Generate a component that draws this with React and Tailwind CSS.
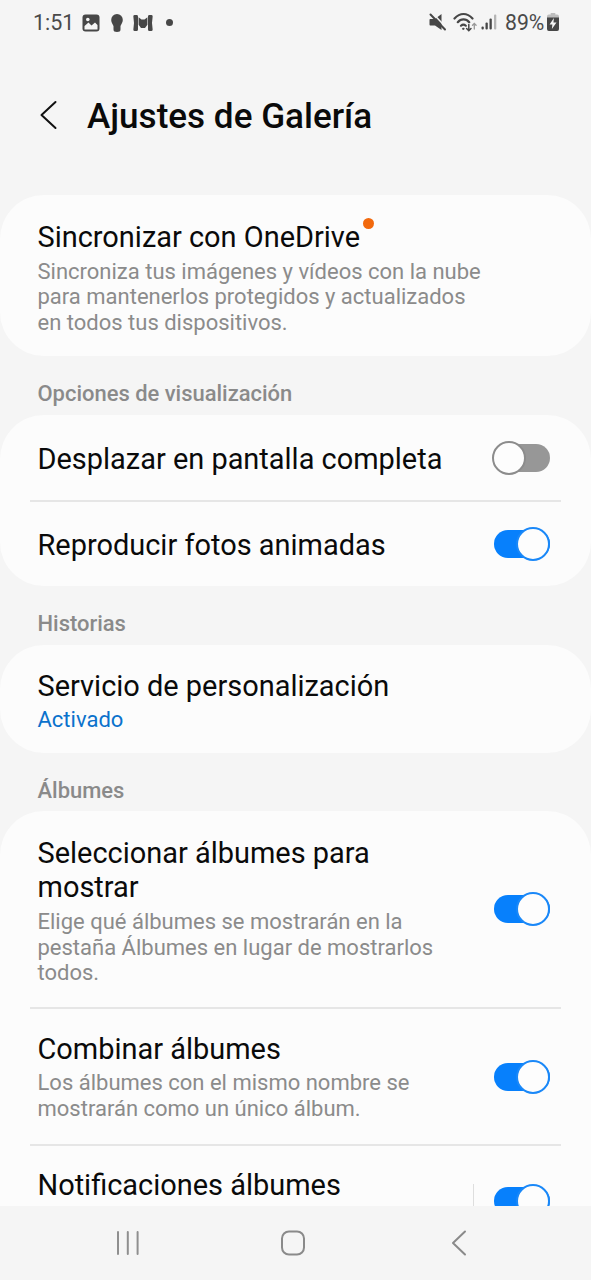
// Gallery settings screen
import { useState } from "react";

function Toggle({ on, onClick }) {
  return (
    <button className="relative block h-[34px] w-[58px] shrink-0" onClick={onClick}>
      <span className={`absolute top-[3px] left-[2px] h-7 w-14 rounded-full ${on ? "bg-[#0780fc]" : "bg-[#979797]"}`} />
      <span
        className={`absolute top-0 h-[34px] w-[34px] rounded-full border-2 bg-[#fdfdfd] ${
          on ? "right-0 border-[#1a88f8]" : "left-0 border-[#8c8c8c]"
        }`}
      />
    </button>
  );
}

function Divider() {
  return <div className="mx-[30px] h-[2px] shrink-0 bg-[#e6e6e6]" />;
}

function Section({ title }) {
  return (
    <h2 className="flex h-[59px] shrink-0 items-center pt-[17px] pl-[37.5px] text-[21.95px] leading-[26px] font-medium text-[#8a8a8a]">{title}</h2>
  );
}

function Title({ children }) {
  return <p className="text-[28.95px] leading-[34px] whitespace-nowrap text-[#0a0a0a]">{children}</p>;
}

function Desc({ children }) {
  return <p className="mt-[4.5px] text-[22px] leading-[25.7px] whitespace-nowrap text-[#8b8b8b]">{children}</p>;
}

function StatusBar() {
  return (
    <div className="flex h-[45px] shrink-0 items-center text-[21.5px] text-[#4a4a4a]">
      <span className="mt-px ml-[33px] w-[42px]">1:51</span>
      <svg className="ml-[7px]" width="18" height="18" viewBox="0 0 18 18">
        <rect x="0.5" y="0.5" width="17" height="17" rx="3" fill="#474747" />
        <path d="M2.500 15.500v-3.500l4-3.500 3 3 3.500-3 2.500 2.500v4.500z" fill="#f5f5f5" />
        <circle cx="5.800" cy="5.500" r="1.800" fill="#f5f5f5" />
      </svg>
      <svg className="ml-[10px]" width="14" height="20" viewBox="0 0 14 20">
        <path d="M7 1a5.800 5.800 0 0 1 5.800 6c0 2.500-1.600 4.300-2.300 6v3.500c0 1.800-1.200 2.500-3.500 2.500s-3.500-.7-3.500-2.500V13C2.800 11.300 1.200 9.500 1.200 7A5.800 5.800 0 0 1 7 1z" fill="#474747" />
      </svg>
      <svg className="ml-[9px]" width="20" height="18" viewBox="0 0 20 18">
        <path d="M1.500 1h2.300c1 0 1.200.8 1.200 2v12c0 1.200-.2 2-1.200 2H1.500C.6 17 .2 16.200.4 15L1 9 .400 3C.2 1.800.6 1 1.500 1zM18.500 1h-2.300c-1 0-1.200.8-1.200 2v12c0 1.200.2 2 1.200 2h2.300c.9 0 1.300-.8 1.100-2L19 9l.6-6c.2-1.200-.2-2-1.100-2z" fill="#474747" />
        <path d="M5.600 3.300 8.500 5.500h3l2.900-2.200v7.500L12 14H8l-2.400-3.200z" fill="#474747" />
      </svg>
      <span className="ml-[13px] h-[7px] w-[7px] rounded-full bg-[#474747]" />
      <div className="ml-auto flex items-center pr-[32px]">
        <svg width="18" height="18" viewBox="0 0 18 18">
          <path d="M1.500 6h4.500L12.500 1v16L6 12.500H1.500C.8 12.500.5 12 .5 11.500V7c0-.6.3-1 1-1z" fill="#474747" />
          <path d="m3.500 0 15 16" stroke="#f5f5f5" strokeWidth="1.500" />
          <path d="m1.500 1.500 14.500 15" stroke="#474747" strokeWidth="2" strokeLinecap="round" />
        </svg>
        <svg className="ml-[6px]" width="24" height="20" viewBox="0 0 24 20" fill="none" stroke="#474747" strokeWidth="2.200" strokeLinecap="round">
          <path d="M1.500 6.500c5.500-6 12.500-6 18 0M4.800 10.200c3.200-3.800 8.200-3.800 11.400 0M8 13.700c1.500-1.400 3.300-1.400 4.800 0" />
          <circle cx="10.200" cy="16.800" r=".700" fill="#474747" strokeWidth="1" />
          <path d="M15.800 12.500v6M13.600 16.500l2.200 2.200 2.200-2.200" strokeWidth="1.500" />
          <path d="M21.300 17v-5.500M19.500 13.300l1.800-1.800 1.800 1.800" stroke="#999" strokeWidth="1.300" />
        </svg>
        <svg className="ml-[4px]" width="16" height="18" viewBox="0 0 16 18" fill="#474747">
          <rect x="0.500" y="13.500" width="2.300" height="3" rx="1" />
          <rect x="4.500" y="9.500" width="2.300" height="7" rx="1" />
          <rect x="8.500" y="5.500" width="2.300" height="11" rx="1" />
          <rect x="13" y="1.500" width="2.300" height="15" rx="1" fill="#b5b5b5" />
        </svg>
        <span className="mt-px ml-[8px] w-[40px] whitespace-nowrap text-[21.2px]">89%</span>
        <svg className="ml-[2px]" width="12" height="18" viewBox="0 0 13 18" preserveAspectRatio="none">
          <path d="M4 0h5v1.500h2a2 2 0 0 1 2 2V6H0V3.500a2 2 0 0 1 2-2h2z" fill="#bdbdbd" />
          <path d="M0 4.500h13V16a2 2 0 0 1-2 2H2a2 2 0 0 1-2-2z" fill="#474747" />
          <path d="M7.500 5 2.800 11.500h3L5.300 16l5-6.500H7z" fill="#f5f5f5" />
        </svg>
      </div>
    </div>
  );
}

export default function App() {
  const [state, setState] = useState({ scroll: false, motion: true, select: true, merge: true, notify: true });
  const flip = (key) => setState({ ...state, [key]: !state[key] });

  return (
    <div className="flex h-[1280px] w-[591px] flex-col overflow-hidden bg-[#f5f5f5] font-['Roboto',sans-serif]">
      <StatusBar />

      <header className="flex h-[150px] shrink-0 items-start pt-[50px] pl-[40px]">
        <svg className="mt-[5px]" width="18" height="30" viewBox="0 0 18 30" fill="none" stroke="#111" strokeWidth="2" strokeLinecap="round" strokeLinejoin="round">
          <path d="M15.500 2 1.500 15l14 13" />
        </svg>
        <h1 className="ml-[29px] text-[35.1px] leading-[42px] font-medium text-[#0a0a0a]">Ajustes de Galería</h1>
      </header>

      <main className="flex min-h-0 grow flex-col overflow-hidden">
        <div className="h-[161px] shrink-0 rounded-[44px] bg-[#fcfcfc] pt-[25px] pl-[37.5px]">
          <div className="flex">
            <Title>Sincronizar con OneDrive</Title>
            <span className="-mt-[2px] ml-[2.5px] h-[11px] w-[11px] rounded-full bg-[#f2690d]" />
          </div>
          <Desc>
            Sincroniza tus imágenes y vídeos con la nube<br />
            para mantenerlos protegidos y actualizados<br />
            en todos tus dispositivos.
          </Desc>
        </div>

        <Section title="Opciones de visualización" />
        <div className="h-[171px] shrink-0 rounded-[44px] bg-[#fcfcfc]">
          <div className="flex h-[85px] items-center justify-between pr-[41px] pl-[37.5px]">
            <div className="pt-[2px]">
              <Title>Desplazar en pantalla completa</Title>
            </div>
            <Toggle on={state.scroll} onClick={() => flip("scroll")} />
          </div>
          <Divider />
          <div className="flex h-[84px] items-center justify-between pr-[41px] pl-[37.5px]">
            <div className="pt-[2px]">
              <Title>Reproducir fotos animadas</Title>
            </div>
            <Toggle on={state.motion} onClick={() => flip("motion")} />
          </div>
        </div>

        <Section title="Historias" />
        <div className="h-[108px] shrink-0 rounded-[44px] bg-[#fcfcfc] pt-[24px] pl-[37.5px]">
          <Title>Servicio de personalización</Title>
          <p className="mt-[4px] text-[22px] leading-[25.7px] text-[#0b72cc]">Activado</p>
        </div>

        <Section title="Álbumes" />
        <div className="-mt-px shrink-0 rounded-t-[44px] bg-[#fcfcfc]">
          <div className="flex h-[196px] items-center justify-between pr-[41px] pl-[37.5px]">
            <div className="mt-[4.5px]">
              <Title>
                Seleccionar álbumes para<br />
                mostrar
              </Title>
              <Desc>
                Elige qué álbumes se mostrarán en la<br />
                pestaña Álbumes en lugar de mostrarlos<br />
                todos.
              </Desc>
            </div>
            <Toggle on={state.select} onClick={() => flip("select")} />
          </div>
          <Divider />
          <div className="flex h-[135px] items-center justify-between pr-[41px] pl-[37.5px]">
            <div className="mt-[0.5px]">
              <Title>Combinar álbumes</Title>
              <Desc>
                Los álbumes con el mismo nombre se<br />
                mostrarán como un único álbum.
              </Desc>
            </div>
            <Toggle on={state.merge} onClick={() => flip("merge")} />
          </div>
          <Divider />
          <div className="flex h-[108px] items-start pt-[22px] pr-[41px] pl-[37.5px]">
            <Title>Notificaciones álbumes</Title>
            <div className="mt-[16px] mr-[18px] ml-auto h-10 w-px bg-[#dedede]" />
            <div className="mt-[16px]">
              <Toggle on={state.notify} onClick={() => flip("notify")} />
            </div>
          </div>
        </div>
      </main>

      <nav className="flex h-[74px] shrink-0 items-center bg-[#f5f5f5] pl-[116px]">
        <svg width="24" height="26" viewBox="0 0 24 26" stroke="#8f8f8f" strokeWidth="2" strokeLinecap="round">
          <path d="M2 2v22M11.800 2v22M21.600 2v22" />
        </svg>
        <svg className="ml-[140px]" width="26" height="26" viewBox="0 0 26 26" fill="none" stroke="#8a8a8a" strokeWidth="2">
          <rect x="2" y="1.500" width="22" height="23" rx="7" />
        </svg>
        <svg className="ml-[145px]" width="16" height="26" viewBox="0 0 16 26" fill="none" stroke="#8a8a8a" strokeWidth="2" strokeLinecap="round" strokeLinejoin="round">
          <path d="M14 1.500 2 13l12 11.500" />
        </svg>
      </nav>
    </div>
  );
}
